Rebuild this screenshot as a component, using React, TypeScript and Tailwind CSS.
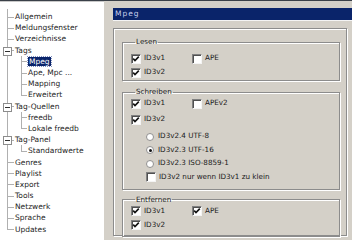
import React from "react";

type TreeNode = {
	label: string;
	level: 0 | 1;
	first?: boolean;
	last?: boolean;
	open?: boolean;
	selected?: boolean;
};

const tree: TreeNode[] = [
	{ label: "Allgemein", level: 0, first: true },
	{ label: "Meldungsfenster", level: 0 },
	{ label: "Verzeichnisse", level: 0 },
	{ label: "Tags", level: 0, open: true },
	{ label: "Mpeg", level: 1, selected: true },
	{ label: "Ape, Mpc ...", level: 1 },
	{ label: "Mapping", level: 1 },
	{ label: "Erweitert", level: 1, last: true },
	{ label: "Tag-Quellen", level: 0, open: true },
	{ label: "freedb", level: 1 },
	{ label: "Lokale freedb", level: 1, last: true },
	{ label: "Tag-Panel", level: 0, open: true },
	{ label: "Standardwerte", level: 1, last: true },
	{ label: "Genres", level: 0 },
	{ label: "Playlist", level: 0 },
	{ label: "Export", level: 0 },
	{ label: "Tools", level: 0 },
	{ label: "Netzwerk", level: 0 },
	{ label: "Sprache", level: 0 },
	{ label: "Updates", level: 0, last: true },
];

const TreeRow = ({ node }: { node: TreeNode }) => {
	const top = node.level === 0 ? node.first : false;
	const bottom = node.level === 0 ? node.last : false;
	return (
		<div className="relative h-[11.2px] flex items-center">
			{/* root line */}
			<span
				className={`absolute left-[7px] w-px bg-[#b0b0b0] ${top ? "top-[-2px]" : "top-0"} ${bottom ? "bottom-1/2" : "bottom-0"}`}
			/>
			{node.level === 0 && <span className="absolute left-[7px] top-1/2 w-[7px] h-px bg-[#b0b0b0]" />}
			{node.open && (
				<span className="absolute left-[3px] top-[2px] w-[9px] h-[9px] bg-white border border-[#8c8c8c] flex items-center justify-center">
					<span className="w-[5px] h-px bg-[#303030]" />
				</span>
			)}
			{node.level === 1 && (
				<>
					<span className={`absolute left-[21px] w-px bg-[#b0b0b0] top-0 ${node.last ? "bottom-1/2" : "bottom-0"}`} />
					<span className="absolute left-[21px] top-1/2 w-[6px] h-px bg-[#b0b0b0]" />
				</>
			)}
			{node.selected ? (
				<span className="ml-[28px] leading-[9px] bg-[#0a246a] text-white px-[1px] outline outline-1 outline-dotted outline-[#8090c0]">
					{node.label}
				</span>
			) : (
				<span className={`${node.level === 0 ? "ml-[15px]" : "ml-[28px]"} leading-[9px] text-[#1c1c1c]`}>{node.label}</span>
			)}
		</div>
	);
};

const Check = ({ checked }: { checked?: boolean }) => (
	<span className="w-[10px] h-[10px] shrink-0 bg-white border border-t-[#808080] border-l-[#808080] border-r-[#f4f4f4] border-b-[#f4f4f4] shadow-[inset_1px_1px_0_#505050] flex items-center justify-center">
		{checked && (
			<svg width="8" height="8" viewBox="0 0 8 8">
				<path d="M1.2 3.6 L3 5.6 L6.8 1.6" fill="none" stroke="#111" strokeWidth="1.6" />
			</svg>
		)}
	</span>
);

const Radio = ({ checked }: { checked?: boolean }) => (
	<span className="w-[8px] h-[8px] shrink-0 rounded-full bg-white border border-[#909090] flex items-center justify-center">
		{checked && <span className="w-[3px] h-[3px] rounded-full bg-[#111]" />}
	</span>
);

const CheckItem = ({ label, checked, className = "" }: { label: string; checked?: boolean; className?: string }) => (
	<div className={`flex items-center gap-[3px] ${className}`}>
		<Check checked={checked} />
		<span>{label}</span>
	</div>
);

const RadioItem = ({ label, checked }: { label: string; checked?: boolean }) => (
	<div className="flex items-center h-[13px] pl-[15px] gap-[4px]">
		<Radio checked={checked} />
		<span>{label}</span>
	</div>
);

const Group = ({ title, className = "", children }: { title: string; className?: string; children: React.ReactNode }) => (
	<fieldset
		className={`border border-[#8c8c8c] shadow-[inset_1px_1px_0_#fff,1px_1px_0_#fff] pl-[8px] ${className}`}
	>
		<legend className="ml-[4px] px-[1px] leading-[10px] text-[#202020]">{title}</legend>
		{children}
	</fieldset>
);

export default function App() {
	return (
		<div
			className="w-[352px] h-[240px] overflow-hidden bg-[#d4d0c8] border-t border-[#3a4048] flex"
			style={{ fontFamily: '"DejaVu Sans", sans-serif' }}
		>
			{/* tree */}
			<div className="w-[104px] h-full bg-white pt-[9px] text-[7.5px] border-t border-[#c8c8c8]">
				{tree.map((n) => (
					<TreeRow key={n.label} node={n} />
				))}
			</div>

			{/* settings page */}
			<div className="flex-1 flex flex-col pl-[9px] text-[7.2px] text-[#1a1a1a]">
				<div className="mt-[7px] h-[13px] bg-[#0a246a] border-b border-[#f4f4f4] flex items-center pl-[2px] text-[#c8d0ec] tracking-[1px] text-[7.5px]">
					Mpeg
				</div>

				<div className="mt-[7px] w-[234px] h-[208px] border border-[#8c8c8c] shadow-[inset_1px_1px_0_#fff,1px_1px_0_#fff] pt-[8px] pl-[8px] pr-[6px] flex flex-col">
					<Group title="Lesen" className="pb-[1px]">
						<div className="flex mt-[5px] h-[13px]">
							<CheckItem label="ID3v1" checked className="w-[61px]" />
							<CheckItem label="APE" />
						</div>
						<CheckItem label="ID3v2" checked className="h-[13px] mt-px" />
					</Group>

					<Group title="Schreiben" className="mt-[6px] pb-[5px]">
						<div className="flex h-[13px]">
							<CheckItem label="ID3v1" checked className="w-[61px]" />
							<CheckItem label="APEv2" />
						</div>
						<CheckItem label="ID3v2" checked className="h-[13px] mt-[3px]" />
						<div className="mt-[4px] flex flex-col gap-[0.5px]">
							<RadioItem label="ID3v2.4 UTF-8" />
							<RadioItem label="ID3v2.3 UTF-16" checked />
							<RadioItem label="ID3v2.3 ISO-8859-1" />
							<CheckItem label="ID3v2 nur wenn ID3v1 zu klein" className="h-[13px] pl-[15px] gap-[2px]" />
						</div>
					</Group>

					<Group title="Entfernen" className="mt-[5px] pb-[4px]">
						<div className="flex h-[13px]">
							<CheckItem label="ID3v1" checked className="w-[61px]" />
							<CheckItem label="APE" checked />
						</div>
						<CheckItem label="ID3v2" checked className="h-[13px] mt-px" />
					</Group>
				</div>
			</div>
		</div>
	);
}
